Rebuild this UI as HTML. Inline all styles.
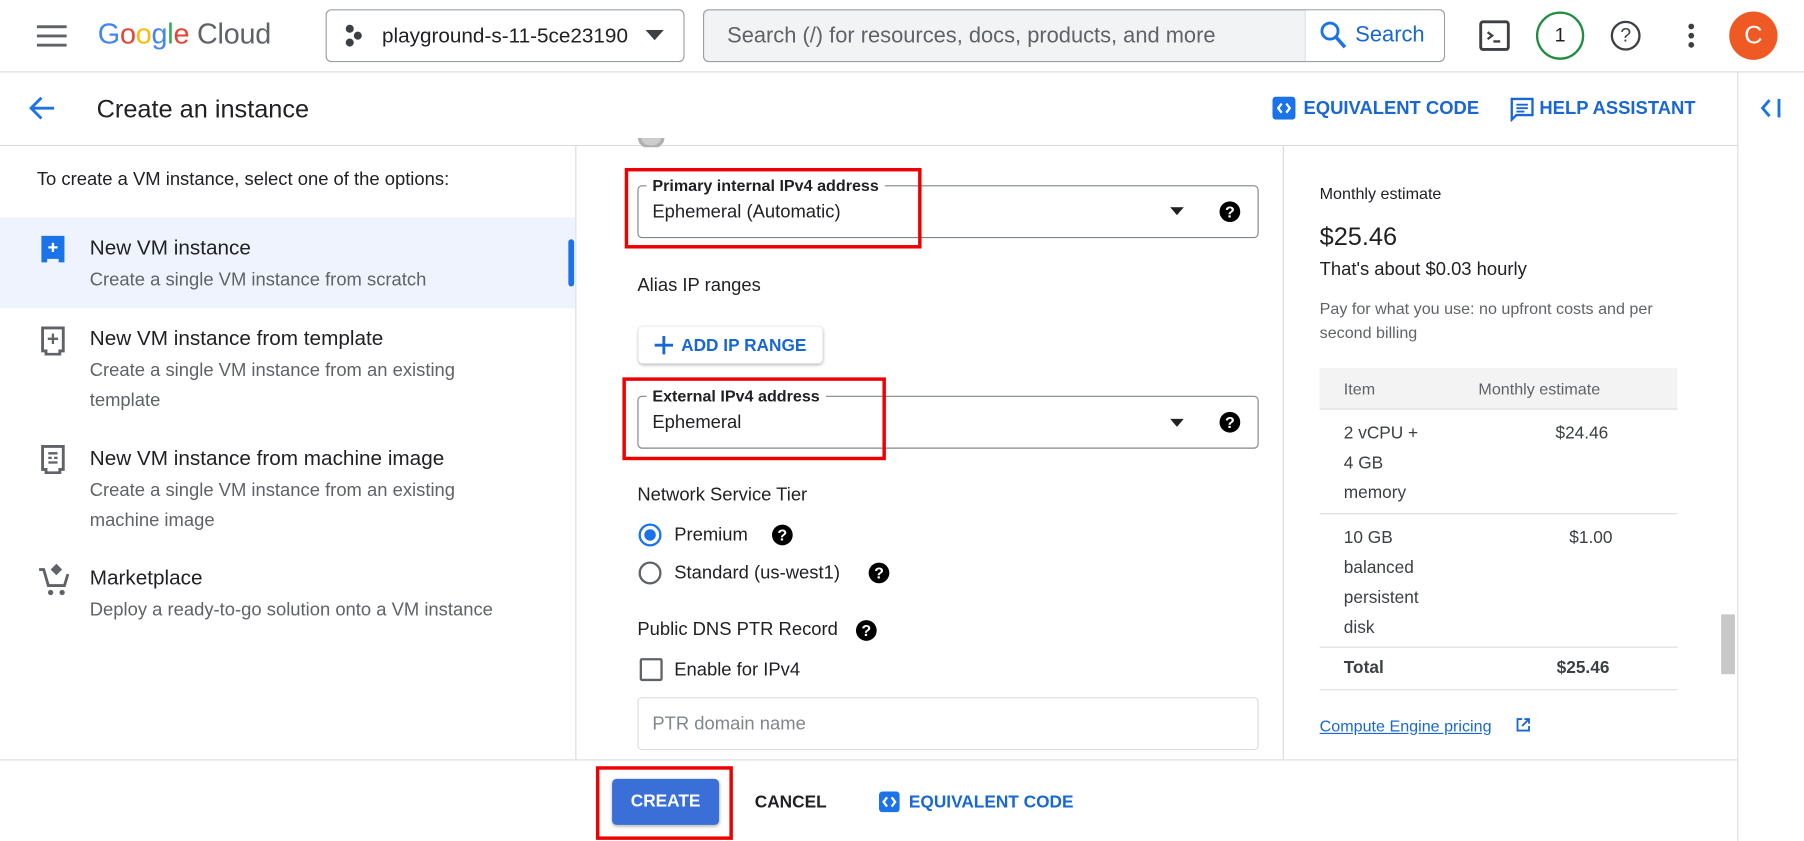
<!DOCTYPE html>
<html><head><meta charset="utf-8"><style>
*{box-sizing:border-box;margin:0;padding:0}
html,body{width:1804px;height:841px;overflow:hidden;background:#fff}
#s{position:absolute;left:0;top:0;width:1568px;height:731px;transform:scale(1.15051);transform-origin:0 0;font-family:"Liberation Sans",sans-serif;color:#202124}
.a{position:absolute;white-space:nowrap}
.g{color:#5f6368}
.b{color:#1a73e8}
.q{position:absolute;width:18px;height:18px;border-radius:50%;background:#000;color:#fff;font-size:14px;font-weight:bold;text-align:center;line-height:18px}
.fld{position:absolute;border:1px solid #80868b;border-radius:4px}
.red{position:absolute;border:3px solid #e00}
</style></head><body><div id="s">
<!-- top bar -->
<div class="a" style="left:0;top:62px;width:1568px;height:1px;background:#dadce0"></div>
<svg class="a" style="left:32px;top:21px" width="26" height="20"><rect y="1" width="26" height="2.5" fill="#5f6368"/><rect y="9" width="26" height="2.5" fill="#5f6368"/><rect y="17" width="26" height="2.5" fill="#5f6368"/></svg>
<div class="a" style="left:85px;top:16px;font-size:25px;letter-spacing:-0.2px"><span style="color:#4285f4">G</span><span style="color:#ea4335">o</span><span style="color:#fbbc04">o</span><span style="color:#4285f4">g</span><span style="color:#34a853">l</span><span style="color:#ea4335">e</span><span style="color:#5f6368"> Cloud</span></div>
<div class="a" style="left:283px;top:8px;width:312px;height:46px;border:1px solid #9aa0a6;border-radius:5px"></div>
<svg class="a" style="left:299px;top:21px" width="16" height="20"><circle cx="5" cy="4" r="3.5" fill="#3c4043"/><circle cx="12" cy="10" r="3.5" fill="#3c4043"/><circle cx="5" cy="16" r="3.5" fill="#3c4043"/></svg>
<div class="a" style="left:332px;top:21px;font-size:18px;color:#202124">playground-s-11-5ce23190</div>
<svg class="a" style="left:561px;top:26px" width="16" height="10"><path d="M0 0h16L8 9z" fill="#3c4043"/></svg>
<div class="a" style="left:611px;top:8px;width:645px;height:46px;border:1px solid #9aa0a6;border-radius:5px;background:#f1f3f4"></div>
<div class="a" style="left:1134px;top:9px;width:121px;height:44px;background:#fff;border-left:1px solid #dadce0;border-radius:0 5px 5px 0"></div>
<div class="a g" style="left:632px;top:21px;font-size:19px">Search (/) for resources, docs, products, and more</div>
<svg class="a" style="left:1147px;top:18px" width="24" height="26"><circle cx="9" cy="9" r="7" stroke="#1a73e8" stroke-width="2.5" fill="none"/><path d="M14 14l8 9" stroke="#1a73e8" stroke-width="3"/></svg>
<div class="a b" style="left:1178px;top:20px;font-size:19px;color:#1967d2">Search</div>
<svg class="a" style="left:1285px;top:17px" width="28" height="28"><rect x="2" y="2" width="24" height="24" rx="2" stroke="#3c4043" stroke-width="2.5" fill="none"/><path d="M8 11l4 3-4 3M13 19h6" stroke="#3c4043" stroke-width="2" fill="none"/></svg>
<div class="a" style="left:1335px;top:10px;width:42px;height:42px;border:2.5px solid #1e8e3e;border-radius:50%;text-align:center;line-height:37px;font-size:17px">1</div>
<div class="a" style="left:1400px;top:18px;width:26px;height:26px;border:2.5px solid #3c4043;border-radius:50%;text-align:center;line-height:22px;font-size:17px;color:#3c4043">?</div>
<svg class="a" style="left:1466px;top:20px" width="8" height="22"><circle cx="4" cy="3" r="2.5" fill="#3c4043"/><circle cx="4" cy="11" r="2.5" fill="#3c4043"/><circle cx="4" cy="19" r="2.5" fill="#3c4043"/></svg>
<div class="a" style="left:1503px;top:10px;width:42px;height:42px;border-radius:50%;background:#ef5a24;color:#fff;text-align:center;line-height:42px;font-size:22px">C</div>
<!-- page header -->
<div class="a" style="left:1510px;top:62px;width:1px;height:669px;background:#dadce0"></div>
<svg class="a" style="left:25px;top:83px" width="24" height="22"><path d="M22 11H3M11 2L2 11l9 9" stroke="#1a73e8" stroke-width="2.5" fill="none"/></svg>
<div class="a" style="left:84px;top:82px;font-size:22px">Create an instance</div>
<svg class="a" style="left:1106px;top:84px" width="20" height="20"><rect width="20" height="20" rx="3" fill="#1a73e8"/><path d="M8 6l-3 4 3 4M12 6l3 4-3 4" stroke="#fff" stroke-width="2" fill="none"/></svg>
<div class="a" style="left:1133px;top:86px;font-size:16px;font-weight:bold;color:#1967d2">EQUIVALENT CODE</div>
<svg class="a" style="left:1312px;top:84px" width="22" height="22"><path d="M2 2h18v14H6l-4 4z" stroke="#1967d2" stroke-width="2" fill="none"/><path d="M6 7h10M6 10h10M6 13h7" stroke="#1967d2" stroke-width="1.6"/></svg>
<div class="a" style="left:1338px;top:86px;font-size:16px;font-weight:bold;color:#1967d2">HELP ASSISTANT</div>
<svg class="a" style="left:1530px;top:84px" width="20" height="20"><path d="M8 3L2 10l6 7" stroke="#1a73e8" stroke-width="2.5" fill="none"/><rect x="15" y="2" width="2.5" height="16" fill="#1a73e8"/></svg>
<div class="a" style="left:0;top:126px;width:1510px;height:1px;background:#dadce0"></div>
<!-- left panel -->
<div class="a" style="left:500px;top:127px;width:1px;height:533px;background:#dadce0"></div>
<div class="a" style="left:32px;top:148px;font-size:16px">To create a VM instance, select one of the options:</div>
<div class="a" style="left:0;top:189px;width:500px;height:79px;background:#eef3fd"></div>
<div class="a" style="left:494px;top:208px;width:5px;height:41px;background:#1a73e8;border-radius:3px"></div>
<svg class="a" style="left:35px;top:204px" width="22" height="26"><path d="M1 1h20v23h-5v-3H6v3H1z" fill="#1a73e8"/><path d="M11 7v8M7 11h8" stroke="#fff" stroke-width="2"/></svg>
<div class="a" style="left:78px;top:205px;font-size:18px">New VM instance</div>
<div class="a g" style="left:78px;top:235px;font-size:16px">Create a single VM instance from scratch</div>
<svg class="a" style="left:35px;top:283px" width="22" height="26"><path d="M2 2h18v20h-3v3H5v-3H2z" fill="none" stroke="#5f6368" stroke-width="2.5"/><path d="M11 7v9M6.5 11.5h9" stroke="#5f6368" stroke-width="2"/></svg>
<div class="a" style="left:78px;top:284px;font-size:18px">New VM instance from template</div>
<div class="a g" style="left:78px;top:310px;font-size:16px;line-height:26px;white-space:normal;width:380px">Create a single VM instance from an existing template</div>
<svg class="a" style="left:35px;top:386px" width="22" height="26"><path d="M2 2h18v20h-3v3H5v-3H2z" fill="none" stroke="#5f6368" stroke-width="2.5"/><path d="M7 8h8M7 12h3M12 12h3M7 16h8" stroke="#5f6368" stroke-width="2"/></svg>
<div class="a" style="left:78px;top:388px;font-size:18px">New VM instance from machine image</div>
<div class="a g" style="left:78px;top:414px;font-size:16px;line-height:26px;white-space:normal;width:380px">Create a single VM instance from an existing machine image</div>
<svg class="a" style="left:33px;top:489px" width="28" height="30"><path d="M1 6h4l4 14h14l3-10" stroke="#5f6368" stroke-width="2.5" fill="none"/><path d="M16 1l5 5-5 5-5-5z" fill="#5f6368"/><circle cx="11" cy="26" r="2.3" fill="#5f6368"/><circle cx="21" cy="26" r="2.3" fill="#5f6368"/></svg>
<div class="a" style="left:78px;top:492px;font-size:18px">Marketplace</div>
<div class="a g" style="left:78px;top:522px;font-size:16px">Deploy a ready-to-go solution onto a VM instance</div>
<!-- middle -->
<svg class="a" style="left:554px;top:120px" width="24" height="8"><path d="M2 0a10 8 0 0 0 20 0" stroke="#b0b0b0" stroke-width="3" fill="#ccc"/></svg>
<div class="fld" style="left:554px;top:161px;width:540px;height:46px"></div>
<div class="a" style="left:562px;top:153px;background:#fff;padding:0 5px;font-size:14px;font-weight:bold;color:#202124">Primary internal IPv4 address</div>
<div class="a" style="left:567px;top:176px;font-size:16px">Ephemeral (Automatic)</div>
<svg class="a" style="left:1017px;top:180px" width="12" height="7"><path d="M0 0h12L6 7z" fill="#202124"/></svg>
<div class="q" style="left:1060px;top:175px">?</div>
<div class="red" style="left:543px;top:146px;width:258px;height:70px"></div>
<div class="a" style="left:554px;top:240px;font-size:16px">Alias IP ranges</div>
<div class="a" style="left:555px;top:284px;width:160px;height:32px;border-radius:4px;box-shadow:0 1px 3px rgba(0,0,0,.3);background:#fff"></div>
<svg class="a" style="left:568px;top:291px" width="18" height="18"><path d="M9 1v16M1 9h16" stroke="#1967d2" stroke-width="2.5"/></svg>
<div class="a" style="left:592px;top:292px;font-size:15px;font-weight:bold;color:#1967d2">ADD IP RANGE</div>
<div class="fld" style="left:554px;top:344px;width:540px;height:46px"></div>
<div class="a" style="left:562px;top:336px;background:#fff;padding:0 5px;font-size:14px;font-weight:bold">External IPv4 address</div>
<div class="a" style="left:567px;top:359px;font-size:16px">Ephemeral</div>
<svg class="a" style="left:1017px;top:364px" width="12" height="7"><path d="M0 0h12L6 7z" fill="#202124"/></svg>
<div class="q" style="left:1060px;top:358px">?</div>
<div class="red" style="left:541px;top:328px;width:229px;height:72px"></div>
<div class="a" style="left:554px;top:422px;font-size:16px">Network Service Tier</div>
<div class="a" style="left:555px;top:455px;width:20px;height:20px;border-radius:50%;border:2px solid #1a73e8"></div>
<div class="a" style="left:560px;top:460px;width:10px;height:10px;border-radius:50%;background:#1a73e8"></div>
<div class="a" style="left:586px;top:457px;font-size:16px">Premium</div>
<div class="q" style="left:671px;top:456px">?</div>
<div class="a" style="left:555px;top:488px;width:20px;height:20px;border-radius:50%;border:2px solid #5f6368"></div>
<div class="a" style="left:586px;top:490px;font-size:16px">Standard (us-west1)</div>
<div class="q" style="left:755px;top:489px">?</div>
<div class="a" style="left:554px;top:539px;font-size:16px">Public DNS PTR Record</div>
<div class="q" style="left:744px;top:539px">?</div>
<div class="a" style="left:556px;top:572px;width:20px;height:20px;border-radius:2px;border:2px solid #5f6368"></div>
<div class="a" style="left:586px;top:574px;font-size:16px">Enable for IPv4</div>
<div class="a" style="left:554px;top:606px;width:540px;height:46px;border:1px solid #dadce0;border-radius:4px"></div>
<div class="a" style="left:567px;top:621px;font-size:16px;color:#80868b">PTR domain name</div>
<!-- right panel -->
<div class="a" style="left:1115px;top:127px;width:1px;height:533px;background:#dadce0"></div>
<div class="a" style="left:1147px;top:160px;font-size:14px">Monthly estimate</div>
<div class="a" style="left:1147px;top:193px;font-size:22px">$25.46</div>
<div class="a" style="left:1147px;top:226px;font-size:16px">That's about $0.03 hourly</div>
<div class="a g" style="left:1147px;top:258px;font-size:14px;line-height:21px;white-space:normal;width:300px">Pay for what you use: no upfront costs and per second billing</div>
<div class="a" style="left:1147px;top:320px;width:311px;height:36px;background:#f3f3f3;border-bottom:1px solid #dadce0"></div>
<div class="a g" style="left:1168px;top:330px;font-size:14px;color:#5f6368">Item</div>
<div class="a g" style="left:1285px;top:330px;font-size:14px;color:#5f6368">Monthly estimate</div>
<div class="a" style="left:1168px;top:364px;font-size:15px;line-height:26px;color:#3c4043;white-space:normal;width:66px">2 vCPU + 4 GB memory</div>
<div class="a" style="left:1352px;top:364px;font-size:15px;line-height:26px;color:#3c4043">$24.46</div>
<div class="a" style="left:1147px;top:446px;width:311px;height:1px;background:#dadce0"></div>
<div class="a" style="left:1168px;top:455px;font-size:15px;line-height:26px;color:#3c4043;white-space:normal;width:80px">10 GB balanced persistent disk</div>
<div class="a" style="left:1364px;top:455px;font-size:15px;line-height:26px;color:#3c4043">$1.00</div>
<div class="a" style="left:1147px;top:562px;width:311px;height:1px;background:#dadce0"></div>
<div class="a" style="left:1168px;top:572px;font-size:15px;font-weight:bold;color:#3c4043">Total</div>
<div class="a" style="left:1353px;top:572px;font-size:15px;font-weight:bold;color:#3c4043">$25.46</div>
<div class="a" style="left:1147px;top:599px;width:311px;height:1px;background:#dadce0"></div>
<div class="a" style="left:1147px;top:623px;font-size:14px;color:#1967d2;text-decoration:underline">Compute Engine pricing</div>
<svg class="a" style="left:1317px;top:623px" width="14" height="14"><path d="M6 2H2v10h10V8M8 2h4v4M12 2L6 8" stroke="#1967d2" stroke-width="1.6" fill="none"/></svg>
<div class="a" style="left:1496px;top:534px;width:12px;height:52px;background:#c8c8c8"></div>
<!-- footer -->
<div class="a" style="left:0;top:660px;width:1510px;height:1px;background:#dadce0"></div>
<div class="a" style="left:532px;top:677px;width:93px;height:40px;background:#3b6fd8;border-radius:4px;box-shadow:0 1px 3px rgba(0,0,0,.3);color:#fff;font-size:15px;font-weight:bold;text-align:center;line-height:40px">CREATE</div>
<div class="red" style="left:518px;top:666px;width:119px;height:64px"></div>
<div class="a" style="left:656px;top:689px;font-size:15px;font-weight:bold">CANCEL</div>
<svg class="a" style="left:764px;top:688px" width="18" height="18"><rect width="18" height="18" rx="3" fill="#1a73e8"/><path d="M7 5l-3 4 3 4M11 5l3 4-3 4" stroke="#fff" stroke-width="2" fill="none"/></svg>
<div class="a" style="left:790px;top:689px;font-size:15px;font-weight:bold;color:#1967d2">EQUIVALENT CODE</div>
</div></body></html>
